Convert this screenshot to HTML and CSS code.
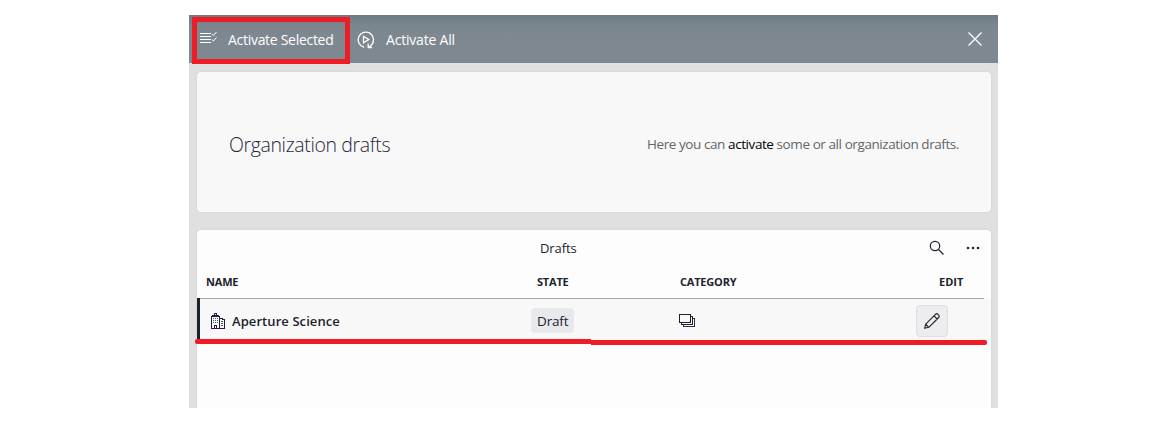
FILE: index.html
```html
<!DOCTYPE html>
<html lang="en">
<head>
<meta charset="utf-8">
<title>Organization drafts</title>
<link rel="stylesheet" href="styles.css">
</head>
<body>
<div class="dialog">
  <header class="toolbar">
    <button class="tool tool-selected">
      <svg width="18" height="14" viewBox="0 0 18 14" fill="none" stroke="#fff"><path d="M0 2.500h11M0 5.500h11M0 8.500h11M0 11.500h11"/><path d="M12 3.200l1.400 1.300L16.500 1M12 8.700l1.400 1.300 3.100-3.500"/></svg>
      <span class="label-selected">Activate Selected</span>
    </button>
    <button class="tool tool-all">
      <svg width="18" height="18" viewBox="0 0 18 18" fill="none" stroke="#fff" stroke-width="1.300"><path d="M7.200 16.300A7.700 7.700 0 1 1 14.300 14.200L11.500 16.400M11.200 12.500v4h4"/><path d="M6.500 5.300v6.600L11.800 8.600z"/></svg>
      <span class="label-all">Activate All</span>
    </button>
    <button class="close" aria-label="Close">
      <svg width="14" height="14" viewBox="0 0 14 14" fill="none" stroke="#fff" stroke-width="1.300"><path d="M.5.5l13 13M13.500.5l-13 13"/></svg>
    </button>
  </header>
  <main class="content">
    <section class="card intro">
      <h1>Organization drafts</h1>
      <p>Here you can <b>activate</b> some or all organization drafts.</p>
    </section>
    <section class="card drafts">
      <div class="caption">
        <span class="caption-title">Drafts</span>
        <svg class="search" width="16" height="16" viewBox="0 0 16 16" fill="none" stroke="#20242c" stroke-width="1.250"><circle cx="6" cy="6" r="4.700"/><path d="M9.500 9.500l5 5"/></svg>
        <svg class="more" width="14" height="4" viewBox="0 0 14 4" fill="#20242c"><circle cx="2" cy="2" r="1.300"/><circle cx="7" cy="2" r="1.300"/><circle cx="12" cy="2" r="1.300"/></svg>
      </div>
      <div class="row head">
        <span>NAME</span><span>STATE</span><span>CATEGORY</span><span class="head-edit">EDIT</span>
      </div>
      <div class="row item">
        <span class="name">
          <svg width="14" height="16" viewBox="0 0 14 16" fill="none" stroke="#2b1745" shape-rendering="crispEdges"><path d="M.5 15.500v-12h8v12zM1.500 3.500v-1h6v1M3.500 2.500v-2h2v2"/><path d="M9 5.500h2.500v1h2v9H9M3.500 15v-2.500h2V15"/><path stroke="#2e6b35" d="M2 5.500h1M4 5.500h1M6 5.500h1M2 7.500h1M4 7.500h1M6 7.500h1M2 9.500h1M4 9.500h1M6 9.500h1M10 8.500h2M10 10.500h2M10 12.500h2"/></svg>
          <span>Aperture Science</span>
        </span>
        <span class="state"><span class="badge">Draft</span></span>
        <span class="category">
          <svg width="16" height="13" viewBox="0 0 16 13" fill="none" stroke="#20242c" shape-rendering="crispEdges"><path d="M.5.5h11v8H.5z"/><path d="M2.500 9v1.500h11v-8H12"/><path d="M4.500 11v1.500h11v-8H14" stroke="#3f2358"/></svg>
        </span>
        <button class="edit" aria-label="Edit">
          <svg width="16" height="16" viewBox="0 0 16 16" fill="none" stroke="#20242c" stroke-width="1.150" stroke-linejoin="round"><path d="M.7 15.300l1-4.100L11.500 1.300a1.700 1.700 0 0 1 2.400 0l.8.800a1.700 1.700 0 0 1 0 2.400L4.800 14.300zM10 2.800L13.200 6M1.700 11.200l3.100 3.100"/></svg>
        </button>
      </div>
    </section>
  </main>
  <div class="mark-box"></div>
  <div class="mark-line mark-left"></div>
  <div class="mark-line mark-right"></div>
</div>
</body>
</html>
```
FILE: styles.css
```css
* { box-sizing: border-box; }
body { margin: 0; padding: 15px 0 0 189px; background: #fff; font-family: "Open Sans", "Noto Sans", sans-serif; font-size: 13px; color: #1c232d; overflow: hidden; }
button { border: 0; padding: 0; margin: 0; background: none; font: inherit; }
svg { display: block; flex: none; overflow: visible; }
.dialog { position: relative; width: 809px; height: 393px; background: #e0e0e0; display: flex; flex-direction: column; }
.toolbar { height: 48px; flex: none; display: flex; align-items: center; background: linear-gradient(#6f7b82, #7a858e 10px, #7e8890 22px); padding: 2px 16px 0 11px; color: #fff; }
.tool { display: flex; align-items: center; color: #fff; white-space: nowrap; font-size: 14px; }
.tool span { margin-top: -2px; }
.tool-selected { gap: 10px; width: 157px; }
.tool-selected svg { margin-top: -4px; }
.tool-all { gap: 11px; }
.tool-all svg { margin-top: -1px; }
.label-selected { letter-spacing: -.29px; }
.label-all { letter-spacing: -.2px; }
.close { margin: -3px 0 0 auto; }
.content { flex: 1; min-height: 0; display: flex; flex-direction: column; gap: 18px; padding: 9px 7px 0 8px; }
.card { background: #f8f8f8; border-radius: 4px; box-shadow: 0 0 2px #c9c9c9; }
.intro { height: 140px; flex: none; display: flex; align-items: center; justify-content: space-between; padding: 4px 32px 0; white-space: nowrap; }
h1 { margin: 0; font-size: 19.500px; font-weight: 300; letter-spacing: -.37px; color: #242b38; }
p { margin: 0; font-size: 13.500px; letter-spacing: -.42px; color: #60666c; }
p b { font-weight: 400; color: #000; }
.drafts { flex: 1; background: #fdfdfd; border-radius: 4px 4px 0 0; overflow: hidden; }
.caption { height: 36px; display: grid; grid-template-columns: 343px 389px 37px 14px; align-items: center; }
.caption-title { grid-column: 2; letter-spacing: -.1px; }
.row { display: grid; grid-template-columns: 331px 143px 237px 1fr; align-items: center; }
.head { height: 32px; width: 787px; padding: 0 0 2px 9px; font-size: 11px; font-weight: 700; letter-spacing: -.2px; }
.head-edit { padding-left: 22px; letter-spacing: 0; }
.item { height: 43px; padding: 2px 0 0 6px; border-left: 3px solid #17202b; background: linear-gradient(#a7a9b1, #a7a9b1) 0 0 / 784px 1px no-repeat #f8f8f8; }
.name { display: flex; align-items: center; gap: 7px; padding-left: 5px; font-weight: 600; letter-spacing: .08px; }
.badge { display: flex; align-items: center; width: 43px; height: 25px; margin-left: -6px; padding-left: 6px; border-radius: 4px; background: #e8e9ed; font-size: 13.500px; letter-spacing: -.15px; }
.category { margin-left: -1px; }
.edit { width: 32px; height: 32px; display: grid; place-items: center; background: #ededf0; border: 1px solid #dddfe3; border-radius: 4px; margin-left: -1px; }
.mark-box { position: absolute; left: 3px; top: 2px; width: 158px; height: 47px; border: 5px solid #ee1c24; }
.mark-line { position: absolute; height: 5px; width: 396px; background: #ee1c24; }
.mark-left { left: 6px; top: 324px; border-radius: 2px 0 0 2px; }
.mark-right { left: 402px; top: 325px; border-radius: 0 2px 2px 0; }
```
